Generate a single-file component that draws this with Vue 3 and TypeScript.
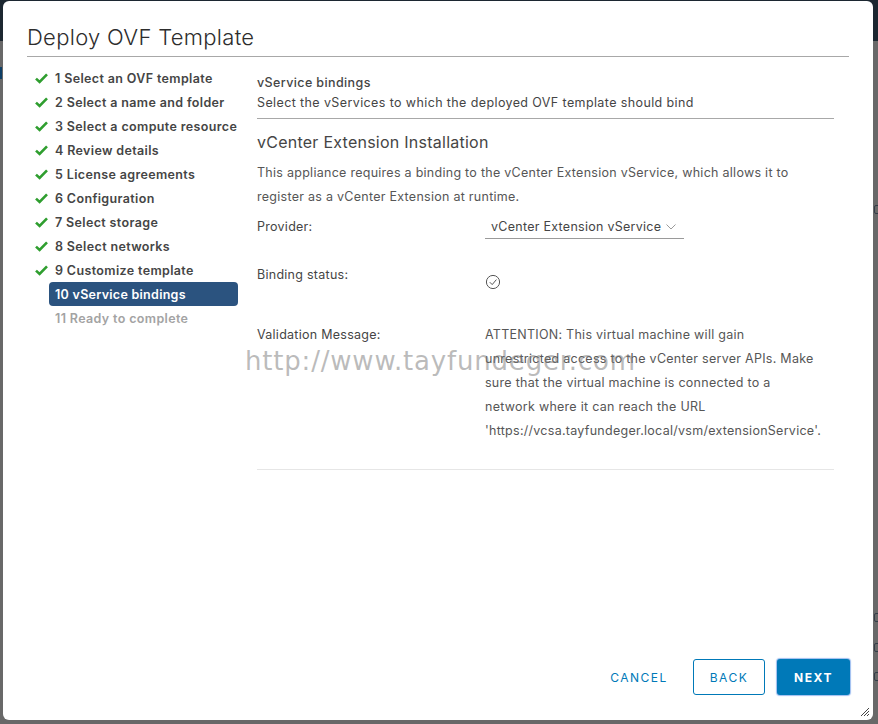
<script setup lang="ts">
const steps: string[] = [
  '1 Select an OVF template',
  '2 Select a name and folder',
  '3 Select a compute resource',
  '4 Review details',
  '5 License agreements',
  '6 Configuration',
  '7 Select storage',
  '8 Select networks',
  '9 Customize template',
]
const behindRows: number[] = [205, 613, 643, 672]
</script>

<template>
  <div class="backdrop">
    <div class="topbar"></div>
    <div class="behind-blue"></div>
    <div v-for="y in behindRows" :key="y" class="behind-box" :style="{ top: y + 'px' }"></div>
    <section class="modal">
      <h1 class="title">Deploy OVF Template</h1>
      <div class="body">
        <nav class="steps">
          <div v-for="s in steps" :key="s" class="step">
            <svg class="check" viewBox="0 0 13 11" width="13" height="11">
              <path d="M1 5.6 L4.6 9 L12 1.4" fill="none" stroke="#2f9e2f" stroke-width="2.6" />
            </svg>
            <span>{{ s }}</span>
          </div>
          <div class="step current"><span>10 vService bindings</span></div>
          <div class="step pending"><span>11 Ready to complete</span></div>
        </nav>
        <main class="content">
          <header class="head">
            <div class="head-title">vService bindings</div>
            <div class="head-sub">Select the vServices to which the deployed OVF template should bind</div>
          </header>
          <h2 class="section">vCenter Extension Installation</h2>
          <p class="desc">This appliance requires a binding to the vCenter Extension vService, which allows it to register as a vCenter Extension at runtime.</p>
          <div class="row provider">
            <div class="label">Provider:</div>
            <div class="select">
              <span>vCenter Extension vService</span>
              <svg viewBox="0 0 10 6" width="10" height="6"><path d="M0.5 0.5 L5 5 L9.5 0.5" fill="none" stroke="#9a9a9a" stroke-width="1" /></svg>
            </div>
          </div>
          <div class="row status">
            <div class="label">Binding status:</div>
            <div class="value">
              <svg viewBox="0 0 16 16" width="16" height="16"><circle cx="8" cy="8" r="6.6" fill="none" stroke="#565656" stroke-width="1" /><path d="M4.8 8.2 L7.2 10.6 L11.4 5.6" fill="none" stroke="#565656" stroke-width="1" /></svg>
            </div>
          </div>
          <div class="row validation">
            <div class="label">Validation Message:</div>
            <div class="message">ATTENTION: This virtual machine will gain unrestricted access to the vCenter server APIs. Make sure that the virtual machine is connected to a network where it can reach the URL 'https://vcsa.tayfundeger.local/vsm/extensionService'.</div>
          </div>
          <div class="rule"></div>
        </main>
      </div>
      <footer class="footer">
        <button class="btn link">CANCEL</button>
        <button class="btn outline">BACK</button>
        <button class="btn primary">NEXT</button>
      </footer>
      <svg class="grip" viewBox="0 0 10 10" width="10" height="10">
        <path d="M1 9 L9 1 M4 9 L9 4 M7 9 L9 7" stroke="#444" stroke-width="1" fill="none" />
      </svg>
      <div class="watermark">http://www.tayfundeger.com</div>
    </section>
  </div>
</template>

<style>
html, body { margin: 0; background: #666; }
</style>

<style scoped>
.backdrop {
  position: relative;
  width: 878px;
  height: 724px;
  box-sizing: border-box;
  padding: 1px 5px 4px 3px;
  background: #686868;
  font-family: Inter, sans-serif;
  color: #565656;
  overflow: hidden;
}
.topbar {
  position: absolute;
  left: 0;
  right: 0;
  top: 0;
  height: 41px;
  background: #1c2731;
}
.behind-blue {
  position: absolute;
  left: 0;
  top: 67px;
  width: 2px;
  height: 12px;
  background: #0f3f66;
}
.behind-box {
  position: absolute;
  left: 874px;
  width: 6px;
  height: 9px;
  box-sizing: border-box;
  border: 1px solid #333c48;
  border-radius: 2px;
}
.modal {
  position: relative;
  box-sizing: border-box;
  height: 100%;
  background: #fff;
  border-radius: 6px;
  padding: 0 24px;
  display: flex;
  flex-direction: column;
}
.title {
  margin: 0;
  height: 56px;
  box-sizing: border-box;
  padding-top: 21px;
  font-size: 22px;
  line-height: 30px;
  font-weight: 300;
  letter-spacing: 0.3px;
  color: #2d2d2d;
  border-bottom: 1px solid #a8a8a8;
}
.body { display: flex; flex: 1; }
.steps { width: 222px; padding-top: 9px; margin-left: 8px; flex: none; }
.step {
  height: 24px;
  display: flex;
  align-items: center;
  font-size: 12.5px;
  font-weight: 600;
  letter-spacing: 0.36px;
  color: #454545;
  white-space: nowrap;
}
.check { margin-right: 7px; flex: none; }
.step.current {
  margin-left: 14px;
  width: 189px;
  background: #2b537f;
  color: #fff;
  border-radius: 4px;
  padding-left: 6px;
  box-sizing: border-box;
  letter-spacing: 0.28px;
}
.step.pending { margin-left: 20px; color: #a3a3a3; }
.content { flex: 1; padding-right: 15px; font-size: 12.5px; letter-spacing: 0.27px; }
.head { border-bottom: 1px solid #a8a8a8; padding-top: 16px; height: 62px; box-sizing: border-box; line-height: 20px; letter-spacing: 0.39px; }
.head-title { font-weight: 500; color: #454545; }
.head-sub { color: #454545; }
.section { margin: 11px 0 0; font-size: 16px; line-height: 24px; font-weight: 400; letter-spacing: 0.25px; color: #454545; }
.desc { margin: 7px 0 0; line-height: 24px; width: 560px; }
.row { display: flex; }
.label { width: 228px; flex: none; color: #454545; }
.provider { margin-top: 6px; line-height: 24px; }
.select { width: 199px; box-sizing: border-box; padding-left: 6px; border-bottom: 1px solid #9a9a9a; display: flex; align-items: center; gap: 5px; height: 24px; color: #454545; white-space: nowrap; }
.status { margin-top: 24px; line-height: 24px; height: 60px; }
.value { padding-top: 11px; }
.validation { line-height: 24px; }
.message { width: 333px; }
.rule { margin-top: 26px; border-top: 1px solid #e6e6e6; }
.footer { display: flex; justify-content: flex-end; align-items: center; gap: 12px; height: 76px; padding-bottom: 10px; box-sizing: border-box; margin-right: -1px; }
.btn { height: 36px; border-radius: 3px; font: 400 12px Inter, sans-serif; letter-spacing: 1.5px; background: none; border: 1px solid transparent; color: #0079b8; padding: 0; }
.link { width: 92px; margin-right: -4px; }
.outline { width: 72px; border-color: #0079b8; }
.primary { width: 73px; background: #0079b8; color: #fff; font-weight: 700; box-shadow: 0 0 1px 1px #9dbdf0; }
.grip { position: absolute; right: 3px; bottom: 3px; }
.watermark {
  position: absolute;
  left: 242px;
  top: 345px;
  font-family: "DejaVu Sans", sans-serif;
  font-size: 26px;
  letter-spacing: 0.8px;
  color: rgba(120, 120, 120, 0.5);
  white-space: nowrap;
  pointer-events: none;
}
</style>
